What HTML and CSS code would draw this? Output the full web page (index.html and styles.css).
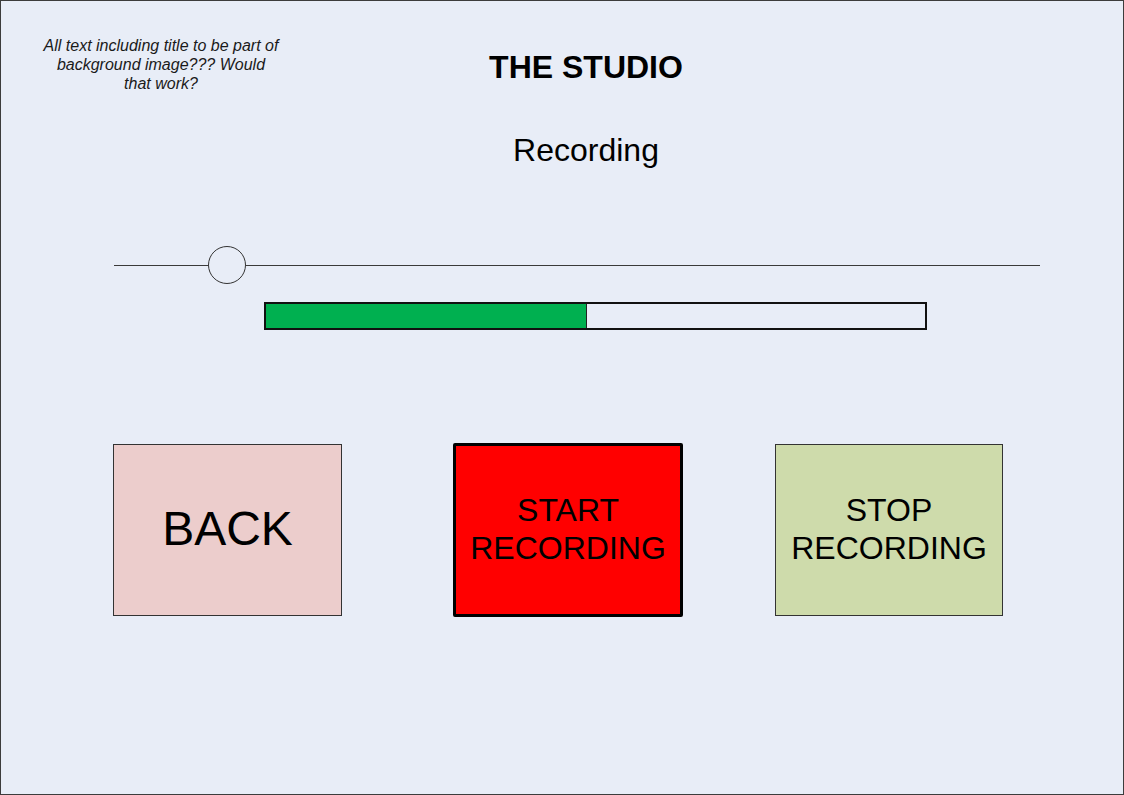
FILE: index.html
```html
<!DOCTYPE html>
<html>
<head>
<meta charset="utf-8">
<link rel="stylesheet" href="styles.css">
</head>
<body>
<div class="frame">
  <div class="top">
    <p class="note">All text including title to be part of<br>background image??? Would<br>that work?</p>
    <div class="titles">
      <h1 class="title">THE STUDIO</h1>
      <h2 class="subtitle">Recording</h2>
    </div>
  </div>
  <div class="slider">
    <div class="track short"></div>
    <div class="knob"></div>
    <div class="track long"></div>
  </div>
  <div class="progress">
    <div class="fill" style="width: 321px"></div>
  </div>
  <div class="buttons">
    <div class="btn back">BACK</div>
    <div class="btn start">START<br>RECORDING</div>
    <div class="btn stop">STOP<br>RECORDING</div>
  </div>
</div>
</body>
</html>
```
FILE: styles.css
```css
html, body {
  margin: 0;
  padding: 0;
}
body {
  font-family: "Liberation Sans", Arial, sans-serif;
  color: #000;
}
.frame {
  width: 1124px;
  height: 795px;
  box-sizing: border-box;
  border: 1px solid #3c3c3c;
  background: #e8edf7;
  overflow: hidden;
}
.top {
  display: flex;
  align-items: flex-start;
}
.note {
  margin: 35px 0 0 34px;
  width: 252px;
  font-size: 16px;
  line-height: 19px;
  font-style: italic;
  text-align: center;
  color: #1a1a1a;
}
.titles {
  margin-left: 149px;
  width: 300px;
  display: flex;
  flex-direction: column;
  align-items: center;
}
.title {
  margin: 48px 0 0 0;
  font-size: 32px;
  line-height: 37px;
  font-weight: bold;
}
.subtitle {
  margin: 46px 0 0 0;
  font-size: 32px;
  line-height: 37px;
  font-weight: normal;
}
.slider {
  margin: 76px 0 0 113px;
  width: 926px;
  height: 40px;
  display: flex;
  align-items: center;
}
.track {
  height: 1px;
  background: #3a3a3a;
}
.track.short {
  width: 94px;
}
.track.long {
  flex: 1;
}
.knob {
  width: 36px;
  height: 36px;
  border: 1px solid #333;
  border-radius: 50%;
  background: #e8edf7;
}
.progress {
  margin: 17px 0 0 263px;
  width: 663px;
  height: 28px;
  box-sizing: border-box;
  border: 2px solid #111;
  background: #e8edf7;
}
.fill {
  height: 100%;
  background: #00b050;
  border-right: 1px solid #222;
  box-sizing: border-box;
}
.buttons {
  margin: 113px 0 0 112px;
  display: flex;
  align-items: center;
}
.btn {
  box-sizing: border-box;
  display: flex;
  align-items: center;
  justify-content: center;
  text-align: center;
  font-size: 32px;
  line-height: 38px;
  padding-bottom: 3px;
}
.back {
  width: 229px;
  height: 172px;
  border: 1px solid #333;
  background: #eccdcc;
  font-size: 48px;
}
.start {
  margin-left: 111px;
  width: 230px;
  height: 174px;
  border: 3px solid #000;
  border-radius: 2px;
  background: #ff0000;
}
.stop {
  margin-left: 92px;
  width: 228px;
  height: 172px;
  border: 1px solid #333;
  background: #cedbab;
}
```
